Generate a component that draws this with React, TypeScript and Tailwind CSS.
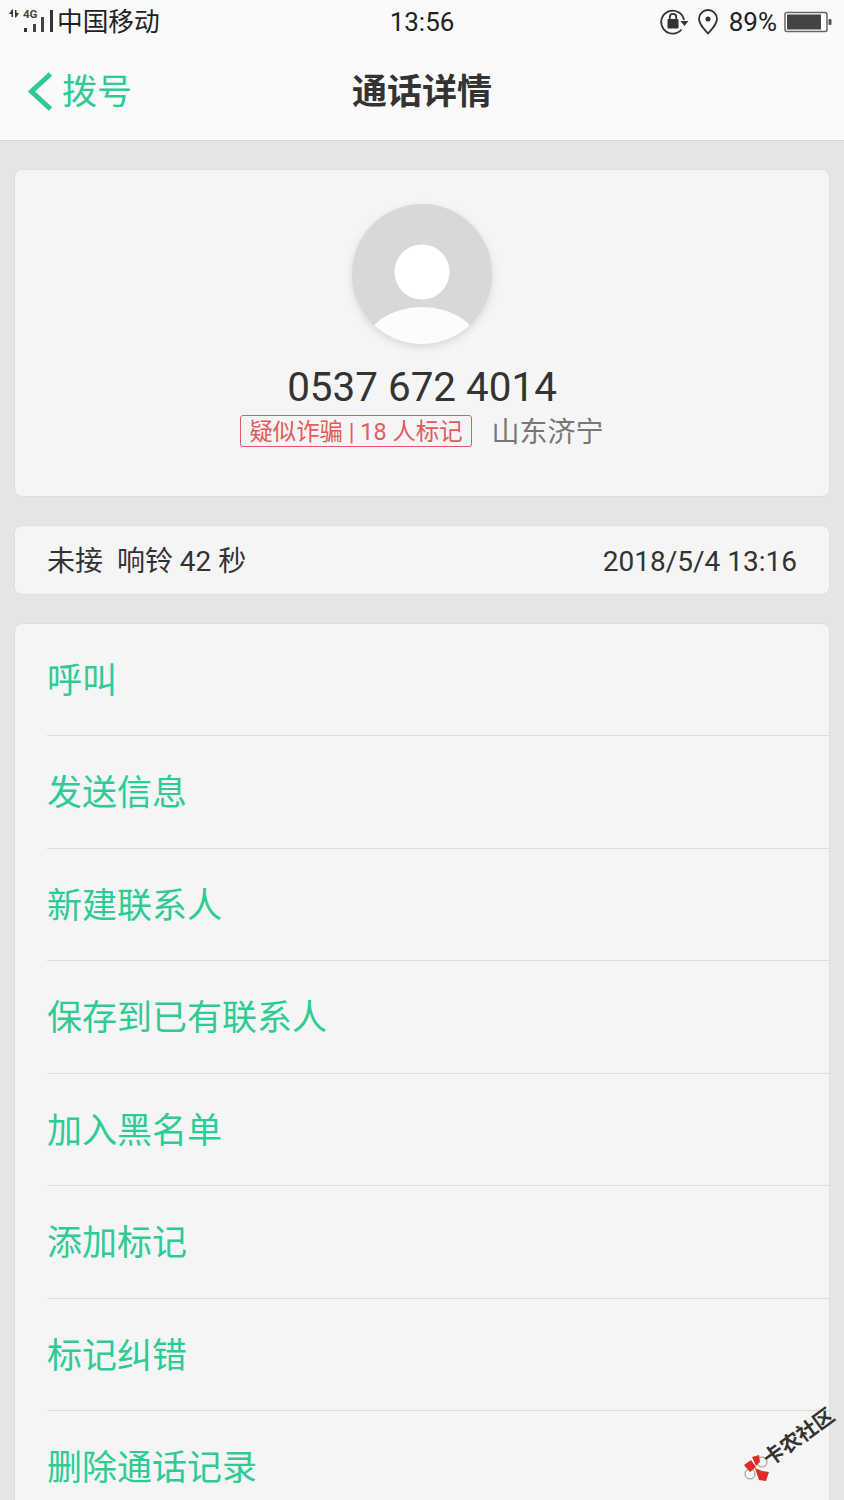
const font = { fontFamily: 'Roboto, "Noto Sans CJK SC", sans-serif' };

const actions = ["呼叫", "发送信息", "新建联系人", "保存到已有联系人", "加入黑名单", "添加标记", "标记纠错", "删除通话记录"];

function SignalIcon() {
    return (
        <svg width="46" height="34" viewBox="0 0 46 34" className="shrink-0">
            <path d="M1 9L4 4.500h1V12H3.500V9zM11 8L8 12.500H7V5h1.500v3z" fill="#333" />
            <text x="15" y="12.500" fontSize="11.500" fontWeight="700" fill="#444" fontFamily="Roboto, sans-serif">4G</text>
            <rect x="16" y="23" width="3" height="4" fill="#333" />
            <rect x="25" y="19" width="3" height="8" fill="#444" />
            <rect x="33" y="12" width="3" height="15" fill="#444" />
            <rect x="42" y="5" width="3" height="22" fill="#333" />
        </svg>
    );
}

function RotationLockIcon() {
    return (
        <svg width="30" height="28" viewBox="0 0 30 28" className="shrink-0">
            <path d="M21.500 21.500A11.500 11.500 0 1 1 24 12" stroke="#333" strokeWidth="1.800" fill="none" />
            <path d="M20.500 13h8l-4 5z" fill="#333" />
            <rect x="7.500" y="11" width="11" height="9.500" rx="1" fill="#333" />
            <path d="M9.800 11.500V9a3.200 3.200 0 0 1 6.400 0v2.500" stroke="#333" strokeWidth="1.800" fill="none" />
        </svg>
    );
}

function LocationIcon() {
    return (
        <svg width="22" height="28" viewBox="0 0 22 28" className="shrink-0">
            <path d="M11 25.500C6 20 2 16 2 11a9 9 0 0 1 18 0c0 5-4 9-9 14.500z" stroke="#333" strokeWidth="1.800" fill="none" />
            <circle cx="11" cy="11" r="2.500" fill="#333" />
        </svg>
    );
}

function BatteryIcon() {
    return (
        <svg width="48" height="22" viewBox="0 0 48 22" className="shrink-0">
            <rect x="1" y="1.500" width="42" height="19" rx="2" stroke="#666" strokeWidth="1.500" fill="#fff" />
            <rect x="3" y="3.500" width="34" height="15" fill="#444" />
            <rect x="44.500" y="8" width="3" height="6" rx="1" fill="#555" />
        </svg>
    );
}

function Avatar() {
    return (
        <div className="w-[140px] h-[140px] rounded-full overflow-hidden bg-[#d8d8d8] shadow-[0_3px_8px_rgba(0,0,0,0.12)] shrink-0">
            <svg width="140" height="140" viewBox="0 0 140 140">
                <circle cx="70" cy="68" r="27.500" fill="#fff" />
                <ellipse cx="70" cy="145" rx="58" ry="42" fill="#fcfcfc" />
            </svg>
        </div>
    );
}

function Watermark() {
    return (
        <div className="absolute left-[742px] top-[1406px] w-[96px] h-[76px] pointer-events-none">
            <svg width="30" height="30" viewBox="0 0 30 30" className="absolute left-0 top-[46px]">
                <circle cx="20" cy="10" r="5" fill="none" stroke="#777" strokeWidth="0.800" />
                <circle cx="8" cy="22" r="5" fill="none" stroke="#777" strokeWidth="0.800" />
                <path d="M2 13l7-5 5 7-6 5zM10 5l7-2 1 7-4 4zM13 16l7 3 7 1-3 9-7-1z" fill="#e02a24" />
            </svg>
            <span className="absolute left-[16px] top-[21px] text-[20.5px] leading-none font-bold text-[#333] whitespace-nowrap origin-center rotate-[-36deg]">卡农社区</span>
        </div>
    );
}

export default function App() {
    return (
        <div style={font} className="relative w-[844px] h-[1500px] overflow-hidden bg-[#e5e5e5]">
            <div className="h-[141px] bg-[#fafafa] border-b border-[#d6d6d6]">
                <div className="relative flex items-center justify-between h-[44px] pl-[8px] pr-[12px]">
                    <div className="flex items-center gap-[3px]">
                        <SignalIcon />
                        <span className="pt-[2px] text-[25.7px] leading-none text-[#222]">中国移动</span>
                    </div>
                    <span className="absolute left-0 right-0 text-center text-[26px] leading-none text-[#222]">13:56</span>
                    <div className="flex items-center">
                        <RotationLockIcon />
                        <div className="ml-[7px]"><LocationIcon /></div>
                        <span className="ml-[10px] mr-[7px] text-[26px] leading-none text-[#222]">89%</span>
                        <BatteryIcon />
                    </div>
                </div>
                <div className="relative flex items-center h-[96px] pl-[28px]">
                    <svg width="26" height="42" viewBox="0 0 26 42" className="shrink-0">
                        <path d="M22.500 3L3.500 20.500l19 17.500" stroke="#2ecb95" strokeWidth="5" fill="none" />
                    </svg>
                    <span className="ml-[8px] text-[35px] leading-none text-[#2ecb95]">拨号</span>
                    <span className="absolute left-0 right-0 text-center text-[35px] leading-none font-bold text-[#333]">通话详情</span>
                </div>
            </div>

            <div className="flex flex-col gap-[28px] px-[14px] pt-[28px]">
                <div className="flex flex-col items-center h-[328px] pt-[34px] rounded-[8px] bg-[#f5f5f5] border border-[#dedede]">
                    <Avatar />
                    <div className="mt-[20px] text-[40.4px] leading-[48px] text-[#333]">0537 672 4014</div>
                    <div className="flex items-center mt-[3px]">
                        <span className="flex items-center h-[32px] pt-[4px] px-[8px] rounded-[3px] border border-[#e55a5a] text-[23.4px] leading-none text-[#e55a5a]">疑似诈骗 | 18 人标记</span>
                        <span className="ml-[20px] pt-[4px] text-[28px] leading-none text-[#777]">山东济宁</span>
                    </div>
                </div>

                <div className="flex items-center justify-between h-[70px] pt-[4px] px-[32px] rounded-[8px] bg-[#f5f5f5] border border-[#dedede] text-[28px] leading-none text-[#333]">
                    <span>未接&nbsp;&nbsp;响铃 42 秒</span>
                    <span>2018/5/4 13:16</span>
                </div>

                <div className="rounded-[8px] bg-[#f5f5f5] border border-[#dedede] pl-[32px]">
                    {actions.map((label) => (
                        <div key={label} className="flex items-center first:h-[112px] h-[112.5px] pt-[4px] border-b border-[#dcdcdc] text-[35px] leading-none text-[#2ecb95]">
                            {label}
                        </div>
                    ))}
                </div>
            </div>

            <Watermark />
        </div>
    );
}
